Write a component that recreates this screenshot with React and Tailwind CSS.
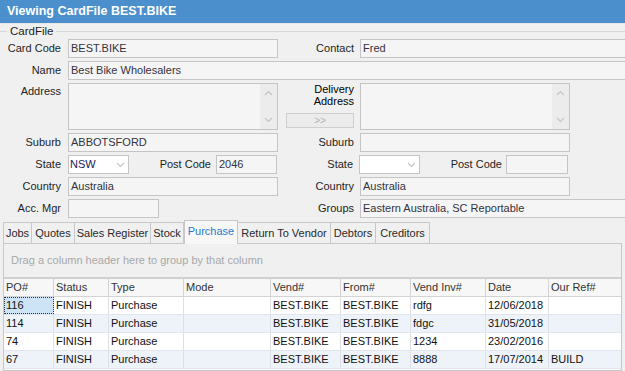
import React from "react";

const Chev = ({ up }) => (
  <svg width="9" height="6" viewBox="0 0 9 6" className="block">
    <path d={up ? "M1 5 L4.5 1.5 L8 5" : "M1 1 L4.5 4.5 L8 1"} fill="none" stroke="#c4c4c4" strokeWidth="1.2" />
  </svg>
);

const Input = ({ w, value = "", className = "" }) => (
  <div className={`h-[19px] shrink-0 border border-[#c5c5c5] bg-[#f5f5f5] flex items-center pl-[2px] text-[#33333d] whitespace-nowrap overflow-hidden ${w} ${className}`}>
    {value}
  </div>
);

const Label = ({ w, children, className = "" }) => (
  <div className={`text-right text-[#1e1e1e] shrink-0 whitespace-nowrap ${w} ${className}`}>{children}</div>
);

const TextArea = () => (
  <div className="h-[47px] w-[210px] shrink-0 border border-[#c5c5c5] bg-[#f5f5f5] flex justify-end">
    <div className="w-[17px] bg-[#ececec] flex flex-col items-center justify-between py-[6px]">
      <Chev up />
      <Chev />
    </div>
  </div>
);

const Select = ({ value = "" }) => (
  <div className="h-[19px] w-[61px] shrink-0 border border-[#c5c5c5] bg-white flex items-center text-[#1a1a5a]">
    <div className="flex-1 pl-[1px]">{value}</div>
    <div className="w-[16px] h-full flex items-center justify-center">
      <Chev />
    </div>
  </div>
);

const tabs = [
  ["Jobs", "w-[29px]"],
  ["Quotes", "w-[43px]"],
  ["Sales Register", "w-[76px]"],
  ["Stock", "w-[33px]"],
  ["Purchase", "w-[54px]", true],
  ["Return To Vendor", "w-[93px]"],
  ["Debtors", "w-[45px]"],
  ["Creditors", "w-[54px]"],
];

const cols = [
  ["PO#", "w-[50px]"],
  ["Status", "w-[55px]"],
  ["Type", "w-[75px]"],
  ["Mode", "w-[87px]"],
  ["Vend#", "w-[70px]"],
  ["From#", "w-[70px]"],
  ["Vend Inv#", "w-[75px]"],
  ["Date", "w-[63px]"],
  ["Our Ref#", "flex-1"],
];

const rows = [
  ["116", "FINISH", "Purchase", "", "BEST.BIKE", "BEST.BIKE", "rdfg", "12/06/2018", ""],
  ["114", "FINISH", "Purchase", "", "BEST.BIKE", "BEST.BIKE", "fdgc", "31/05/2018", ""],
  ["74", "FINISH", "Purchase", "", "BEST.BIKE", "BEST.BIKE", "1234", "23/02/2016", ""],
  ["67", "FINISH", "Purchase", "", "BEST.BIKE", "BEST.BIKE", "8888", "17/07/2014", "BUILD"],
];

export default function App() {
  return (
    <div className="w-[625px] h-[371px] overflow-hidden bg-[#f0f0f0] text-[11px] leading-[13px] font-['Liberation_Sans',Arial,sans-serif] flex flex-col">
      <div className="h-[24px] shrink-0 bg-[#4b8fcc] text-white font-bold text-[12.5px] flex items-center pl-[7px] border-b border-[#e6e6e6]">
        Viewing CardFile BEST.BIKE
      </div>
      {/* group header */}
      <div className="h-[14px] shrink-0 flex items-center">
        <div className="w-[7px] h-px bg-[#d8d8d8]" />
        <div className="px-[3px] text-[#1e1e1e] text-[11.5px]">CardFile</div>
        <div className="flex-1 h-px bg-[#d8d8d8]" />
      </div>
      <div className="flex flex-col gap-[3px] pt-[1px]">
        <div className="flex items-center">
          <Label w="w-[61px]">Card Code</Label>
          <Input w="w-[210px] ml-[7px]" value="BEST.BIKE" />
          <Label w="w-[76px]">Contact</Label>
          <Input w="w-[280px] ml-[6px]" value="Fred" />
        </div>
        <div className="flex items-center">
          <Label w="w-[61px]">Name</Label>
          <Input w="w-[570px] ml-[7px]" value="Best Bike Wholesalers" />
        </div>
        <div className="flex items-start">
          <Label w="w-[61px]" className="pt-[2px]">Address</Label>
          <div className="ml-[7px]"><TextArea /></div>
          <div className="w-[76px] h-[47px] shrink-0 flex flex-col items-end">
            <div className="text-right leading-[12px]">Delivery<br />Address</div>
            <div className="mt-[6px] w-[68px] h-[15px] border border-[#cfcfcf] bg-[#ececec] text-[#b0b0b0] text-[10px] flex items-center justify-center">&gt;&gt;</div>
          </div>
          <div className="ml-[6px]"><TextArea /></div>
        </div>
        <div className="flex items-center">
          <Label w="w-[61px]">Suburb</Label>
          <Input w="w-[210px] ml-[7px]" value="ABBOTSFORD" />
          <Label w="w-[76px]">Suburb</Label>
          <Input w="w-[210px] ml-[6px]" />
        </div>
        <div className="flex items-center">
          <Label w="w-[61px]">State</Label>
          <div className="ml-[7px]"><Select value="NSW" /></div>
          <Label w="w-[82px]">Post Code</Label>
          <Input w="w-[61px] ml-[5px]" value="2046" />
          <Label w="w-[76px]">State</Label>
          <div className="ml-[6px]"><Select /></div>
          <Label w="w-[82px]">Post Code</Label>
          <Input w="w-[62px] ml-[4px]" />
        </div>
        <div className="flex items-center">
          <Label w="w-[61px]">Country</Label>
          <Input w="w-[210px] ml-[7px]" value="Australia" />
          <Label w="w-[76px]">Country</Label>
          <Input w="w-[210px] ml-[6px]" value="Australia" />
        </div>
        <div className="flex items-center">
          <Label w="w-[61px]">Acc. Mgr</Label>
          <Input w="w-[91px] ml-[7px]" />
          <Label w="w-[195px]">Groups</Label>
          <Input w="w-[280px] ml-[6px]" value="Eastern Australia, SC Reportable" />
        </div>
      </div>
      {/* tabs */}
      <div className="mt-[3px] h-[22px] shrink-0 flex items-end pl-[3px] text-[11px]">
        {tabs.map(([t, w, active]) =>
          active ? (
            <div key={t} className={`${w} shrink-0 whitespace-nowrap h-[24px] -mb-px relative z-10 bg-[#f7f7f7] border border-b-0 border-[#c8c8c8] text-[#2a7bc8] flex items-center justify-center pb-[3px]`}>{t}</div>
          ) : (
            <div key={t} className={`${w} shrink-0 whitespace-nowrap h-[21px] bg-[#f0f0f0] border border-l-0 first:border-l border-b-0 border-[#c8c8c8] text-[#2a2a2a] flex items-center justify-center`}>{t}</div>
          )
        )}
      </div>
      <div className="flex-1 mx-[3px] border border-[#c8c8c8] bg-[#f7f7f7] flex flex-col">
        <div className="h-[35px] bg-[#f0f0f0] border-b-2 border-[#d0d0d0] flex items-center pl-[7px] text-[#a8a8a8] text-[11px] shrink-0">
          Drag a column header here to group by that column
        </div>
        <div className="h-[18px] flex bg-[#f7f7f7] border-b border-[#d4d4d4] text-[#333] text-[11px] shrink-0">
          {cols.map(([c, w]) => (
            <div key={c} className={`${w} shrink-0 border-r border-[#d4d4d4] last:border-r-0 flex items-center pl-[2px]`}>{c}</div>
          ))}
        </div>
        {rows.map((r, i) => (
          <div key={i} className={`h-[18px] flex shrink-0 border-b border-[#e2e6ec] text-[#111] text-[11px] ${i % 2 ? "bg-[#eef3f9]" : "bg-white"}`}>
            {r.map((v, j) => (
              <div key={j} className={`${cols[j][1]} shrink-0 border-r border-[#dde1e6] last:border-r-0 flex items-center pl-[2px] whitespace-nowrap ${i === 0 && j === 0 ? "bg-[#cde4f7] outline outline-1 outline-dotted outline-[#333] -outline-offset-1" : ""}`}>{v}</div>
            ))}
          </div>
        ))}
      </div>
    </div>
  );
}
